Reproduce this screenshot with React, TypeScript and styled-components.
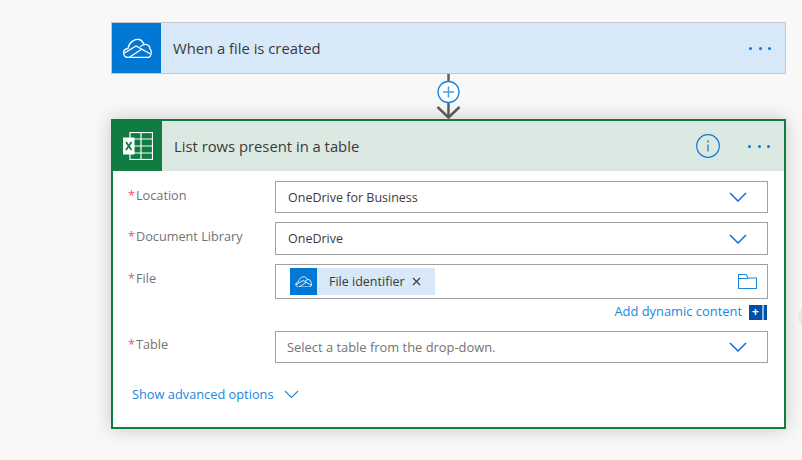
import React from "react";
import styled, { createGlobalStyle } from "styled-components";

const GlobalStyle = createGlobalStyle`
  html, body {
    margin: 0;
    height: 460px;
    overflow: hidden;
    background: #f8f8f8;
    font-family: "Open Sans", "Noto Sans", sans-serif;
  }
`;

const Page = styled.div`
  position: relative;
  width: 802px;
  height: 460px;
  padding: 22px 0 0 111px;
  box-sizing: border-box;
  overflow: hidden;
`;

const EdgeHandle = styled.div`
  position: absolute;
  left: 798px;
  top: 306px;
  width: 22px;
  height: 22px;
  border-radius: 50%;
  background: rgba(0, 0, 0, 0.05);
`;

const Flow = styled.div`
  width: 675px;
  display: flex;
  flex-direction: column;
`;

const TriggerCard = styled.div`
  height: 52px;
  box-sizing: border-box;
  border: 1px solid #c8c8c8;
  background: #d7e8f8;
  display: flex;
  align-items: center;
`;

const ActionCard = styled.div`
  height: 310px;
  box-sizing: border-box;
  border: 2px solid #107c41;
  background: #fff;
  box-shadow: 0 0 18px rgba(0, 0, 0, 0.2);
`;

const ActionHeader = styled.div`
  height: 50px;
  background: #dce9e2;
  display: flex;
  align-items: center;
`;

const IconTile = styled.div<{ $color: string; $width: number }>`
  width: ${(p) => p.$width}px;
  height: 100%;
  flex: none;
  background: ${(p) => p.$color};
  display: flex;
  align-items: center;
  justify-content: center;
`;

const CardTitle = styled.div<{ $left: number }>`
  flex: 1;
  margin-left: ${(p) => p.$left}px;
  font-size: 14.8px;
  color: #3b3a39;
`;

const Dots = styled.div<{ $right: number }>`
  display: flex;
  gap: 6.5px;
  margin-right: ${(p) => p.$right}px;
  span {
    width: 3px;
    height: 3px;
    border-radius: 50%;
    background: #0a78d6;
  }
`;

const InfoButton = styled.svg`
  margin-right: 28px;
`;

const Connector = styled.svg`
  display: block;
  width: 675px;
  height: 45px;
`;

const FormBody = styled.div`
  padding: 10px 16px 0 15px;
  display: flex;
  flex-direction: column;
`;

const Row = styled.div<{ $height: number; $gap: number }>`
  display: flex;
  height: ${(p) => p.$height}px;
  margin-bottom: ${(p) => p.$gap}px;
`;

const Label = styled.div<{ $top?: number }>`
  width: 147px;
  flex: none;
  padding-top: ${(p) => p.$top ?? 5}px;
  font-size: 12.7px;
  line-height: 18px;
  color: #737373;
`;

const Star = styled.span`
  display: inline-block;
  width: 8px;
  color: #f0506e;
`;

const Field = styled.div`
  flex: 1;
  box-sizing: border-box;
  border: 1px solid #a0a0a0;
  background: #fff;
  display: flex;
  align-items: center;
  justify-content: space-between;
  padding: 0 20px 0 12px;
  font-size: 12.5px;
  color: #3b3a39;
`;

const TokenField = styled(Field)`
  padding: 0 10px 0 14px;
`;

const Placeholder = styled.span`
  display: block;
  margin-left: -1px;
  font-size: 12.9px;
  color: #737373;
`;

const Token = styled.div`
  height: 27px;
  display: flex;
  align-items: center;
  background: #d7e8f8;
  color: #3b3a39;
  font-size: 12.5px;
  padding-right: 14px;
`;

const TokenIcon = styled.div`
  width: 27px;
  height: 27px;
  background: #0078d4;
  display: flex;
  align-items: center;
  justify-content: center;
  margin-right: 12px;
`;

const TokenClose = styled.svg`
  margin-left: 7px;
`;

const DynamicRow = styled.div`
  height: 32px;
  box-sizing: border-box;
  display: flex;
  justify-content: flex-end;
  align-items: flex-start;
  gap: 7px;
  padding: 3px 1px 0 0;
  font-size: 12.9px;
  line-height: 18px;
  color: #1a86e0;
`;

const AddBadge = styled.div`
  width: 18px;
  height: 15px;
  margin-top: 3px;
  display: flex;
  background: #0050a8;
  color: #fff;
  font-size: 12px;
  font-weight: 700;
  line-height: 14px;
  span {
    width: 13px;
    text-align: center;
  }
  i {
    width: 2px;
    background: #8fb4de;
  }
`;

const AdvancedRow = styled.div`
  display: flex;
  align-items: center;
  gap: 10px;
  padding-left: 4px;
  font-size: 12.8px;
  line-height: 18px;
  color: #1a86e0;
`;

const Chevron = () => (
  <svg width="18" height="10" viewBox="0 0 18 10" fill="none">
    <path d="M1 1l8 8 8-8" stroke="#0a6fe0" strokeWidth="1.5" />
  </svg>
);

const CloudIcon = ({ width, stroke }: { width: number; stroke: number }) => (
  <svg width={width} height={width * 0.68} viewBox="0 0 30 20.400" fill="none" stroke="#fff" strokeWidth={stroke}>
    <path d="M6.500 19.500C.5 19.500-.5 11.500 6 10.500 7 4.500 12.500.5 17 1.500c2.500.5 4 2.500 5 5 4-.5 6 1.500 6 4.500 2 1.500 1.800 8.500-2.500 8.500z" />
    <path d="M1.800 15.500L14 8l14.500 8M7 19.500L20 11M22 6.500l-4 2" />
  </svg>
);

const ExcelIcon = () => (
  <svg width="30" height="28" viewBox="0 0 30 28">
    <rect x="7" y="0.5" width="22.500" height="27" fill="none" stroke="#fff" strokeWidth="1.200" />
    <path d="M18 .5v27M7 7H29.500M7 14H29.500M7 21H29.500" stroke="#fff" strokeWidth="1.200" />
    <rect x="0" y="5.500" width="11.500" height="17" fill="#fff" />
    <path d="M3 10l5.500 8M8.500 10L3 18" stroke="#107c41" strokeWidth="1.800" />
  </svg>
);

const App = () => (
  <>
    <GlobalStyle />
    <Page>
      <Flow>
        <TriggerCard>
          <IconTile $color="#0078d4" $width={49}>
            <CloudIcon width={30} stroke={1.3} />
          </IconTile>
          <CardTitle $left={12}>When a file is created</CardTitle>
          <Dots $right={14}>
            <span />
            <span />
            <span />
          </Dots>
        </TriggerCard>
        <Connector viewBox="0 0 675 45">
          <path d="M337.500 0v43" stroke="#605e5c" strokeWidth="2.500" />
          <path d="M326.500 33l11 10.500L348.500 33" fill="none" stroke="#605e5c" strokeWidth="2.500" />
          <circle cx="337.500" cy="18" r="10.500" fill="#fff" stroke="#1a86e0" strokeWidth="1.300" />
          <path d="M332 18h11M337.500 12.500v11" stroke="#4a9fe8" strokeWidth="1.600" />
        </Connector>
        <ActionCard>
          <ActionHeader>
            <IconTile $color="#107c41" $width={49}>
              <ExcelIcon />
            </IconTile>
            <CardTitle $left={12}>List rows present in a table</CardTitle>
            <InfoButton width="24" height="24" viewBox="0 0 24 24" fill="none">
              <circle cx="12" cy="12" r="11.300" stroke="#0a78d6" strokeWidth="1.200" />
              <path d="M12 10.500v7" stroke="#0a78d6" strokeWidth="1.200" />
              <circle cx="12" cy="7.500" r="0.900" fill="#0a78d6" />
            </InfoButton>
            <Dots $right={14}>
              <span />
              <span />
              <span />
            </Dots>
          </ActionHeader>
          <FormBody>
            <Row $height={32} $gap={9}>
              <Label>
                <Star>*</Star>Location
              </Label>
              <Field>
                OneDrive for Business
                <Chevron />
              </Field>
            </Row>
            <Row $height={33} $gap={9}>
              <Label>
                <Star>*</Star>Document Library
              </Label>
              <Field>
                OneDrive
                <Chevron />
              </Field>
            </Row>
            <Row $height={35} $gap={0}>
              <Label>
                <Star>*</Star>File
              </Label>
              <TokenField>
                <Token>
                  <TokenIcon>
                    <CloudIcon width={17} stroke={1.6} />
                  </TokenIcon>
                  File identifier
                  <TokenClose width="9" height="9" viewBox="0 0 9 9" fill="none">
                    <path d="M1 1l7 7M8 1L1 8" stroke="#3b3a39" strokeWidth="1.100" />
                  </TokenClose>
                </Token>
                <svg width="19" height="15" viewBox="0 0 19 15" fill="none" stroke="#1a86e0" strokeWidth="1.100">
                  <path d="M.5 14.500V.5h7.500l2 3.500h8.500v10.500zM.5 4.500h9.500" />
                </svg>
              </TokenField>
            </Row>
            <DynamicRow>
              Add dynamic content
              <AddBadge>
                <span>+</span>
                <i />
              </AddBadge>
            </DynamicRow>
            <Row $height={32} $gap={22}>
              <Label $top={4}>
                <Star>*</Star>Table
              </Label>
              <Field>
                <Placeholder>Select a table from the drop-down.</Placeholder>
                <Chevron />
              </Field>
            </Row>
            <AdvancedRow>
              Show advanced options
              <svg width="15" height="9" viewBox="0 0 15 9" fill="none">
                <path d="M1 1l6.500 6.500L14 1" stroke="#1a86e0" strokeWidth="1.100" />
              </svg>
            </AdvancedRow>
          </FormBody>
        </ActionCard>
      </Flow>
      <EdgeHandle />
    </Page>
  </>
);

export default App;
